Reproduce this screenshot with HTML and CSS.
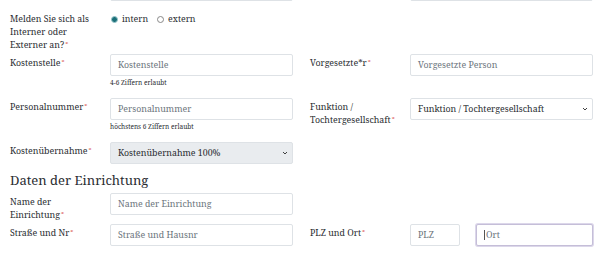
FILE: index.html
```html
<!DOCTYPE html>
<html lang="de">
<head>
<meta charset="utf-8">
<title>Formular</title>
<link rel="stylesheet" href="styles.css">
</head>
<body>
<div class="page">
  <div class="row row-top">
    <div class="half"><div class="label"></div><div class="field"><div class="input gray"></div></div></div>
    <div class="half"><div class="label"></div><div class="field"><div class="input gray"></div></div></div>
  </div>

  <div class="row row-radio">
    <div class="half">
      <div class="label nopad">Melden Sie sich als Interner oder Externer an?<span class="req">*</span></div>
      <div class="field radios">
        <label class="radio"><span class="dot checked"></span>intern</label>
        <label class="radio"><span class="dot"></span>extern</label>
      </div>
    </div>
  </div>

  <div class="row row-help">
    <div class="half">
      <div class="label">Kostenstelle<span class="req">*</span></div>
      <div class="field"><div class="input ph">Kostenstelle</div><div class="help">4-6 Ziffern erlaubt</div></div>
    </div>
    <div class="half">
      <div class="label">Vorgesetzte*r<span class="req">*</span></div>
      <div class="field"><div class="input ph">Vorgesetzte Person</div></div>
    </div>
  </div>

  <div class="row row-help">
    <div class="half">
      <div class="label">Personalnummer<span class="req">*</span></div>
      <div class="field"><div class="input ph">Personalnummer</div><div class="help">höchstens 6 Ziffern erlaubt</div></div>
    </div>
    <div class="half">
      <div class="label">Funktion / Tochtergesellschaft<span class="req">*</span></div>
      <div class="field"><div class="input select">Funktion / Tochtergesellschaft<svg class="chev" viewBox="0 0 8 6" width="6" height="4"><path d="M1 1.5 L4 4.5 L7 1.5" fill="none" stroke="#333" stroke-width="1.4"/></svg></div></div>
    </div>
  </div>

  <div class="row row-cost">
    <div class="half">
      <div class="label">Kostenübernahme<span class="req">*</span></div>
      <div class="field"><div class="input select gray">Kostenübernahme 100%<svg class="chev" viewBox="0 0 8 6" width="6" height="4"><path d="M1 1.5 L4 4.5 L7 1.5" fill="none" stroke="#333" stroke-width="1.4"/></svg></div></div>
    </div>
  </div>

  <h2 class="section">Daten der Einrichtung</h2>

  <div class="row row-name">
    <div class="half">
      <div class="label">Name der Einrichtung<span class="req">*</span></div>
      <div class="field"><div class="input ph">Name der Einrichtung</div></div>
    </div>
  </div>

  <div class="row row-street">
    <div class="half">
      <div class="label">Straße und Nr<span class="req">*</span></div>
      <div class="field"><div class="input ph">Straße und Hausnr</div></div>
    </div>
    <div class="half">
      <div class="label">PLZ und Ort<span class="req">*</span></div>
      <div class="field split">
        <div class="input ph plz">PLZ</div>
        <div class="input ph ort focus"><span class="caret"></span>Ort</div>
      </div>
    </div>
  </div>
</div>
</body>
</html>
```
FILE: styles.css
```css
* { box-sizing: border-box; }
html, body { margin: 0; padding: 0; background: #fff; }
body {
  font-family: "Noto Serif", "DejaVu Serif", serif;
  color: #2a2d31;
  font-size: 8.8px;
  width: 600px;
  height: 259px;
  overflow: hidden;
}
.page { margin-top: -21px; }
.row { display: flex; align-items: flex-start; }
.half { width: 300px; display: flex; align-items: flex-start; padding-left: 10px; }
.label {
  width: 100px;
  line-height: 13px;
  padding-top: 3px;
  padding-right: 10px;
}
.label.nopad { padding-top: 0; }
.req { color: #d9534f; font-size: 6px; vertical-align: top; line-height: 10px; margin-left: 1px; }
.field { width: 183px; }
.input {
  height: 22px;
  border: 1px solid #dee2e6;
  border-radius: 2px;
  background: #fff;
  padding: 0 7px;
  display: flex;
  align-items: center;
  font-size: 8.8px;
  white-space: nowrap;
  position: relative;
}
.input.gray { background: #e9ecef; }
.input.ph { color: #6c757d; }
.select { justify-content: space-between; color: #2a2d31; }
.chev { flex: none; margin-right: -3px; }
.help { font-size: 6.5px; line-height: 12px; margin-top: 1px; }

.row-radio { margin-top: 12px; }
.radios { display: flex; align-items: flex-start; gap: 9px; line-height: 13px; padding-left: 1px; }
.radio { display: flex; align-items: center; gap: 4px; height: 13px; }
.dot {
  width: 7px; height: 7px; border-radius: 50%;
  border: 1px solid #888;
  background: #fff;
}
.dot.checked { background: #1b6f78; border: 1.5px solid #9ac7cc; }

.row-radio + .row-help { margin-top: 2px; }
.row-help + .row-help { margin-top: 9px; }
.row-cost { margin-top: 9px; }

.section {
  font-weight: normal;
  font-size: 13px;
  line-height: 20px;
  margin: 6px 0 0 10px;
}
.row-name { margin-top: 3px; }
.row-street { margin-top: 2px; }

.split { display: flex; gap: 16px; }
.plz { width: 50px; }
.ort { flex: 1; }
.focus { border-color: #c5bed8; box-shadow: 0 0 0 1px #dcd7ea; }
.caret { display: inline-block; width: 1px; height: 10px; background: #555; margin-right: 1px; }
```
